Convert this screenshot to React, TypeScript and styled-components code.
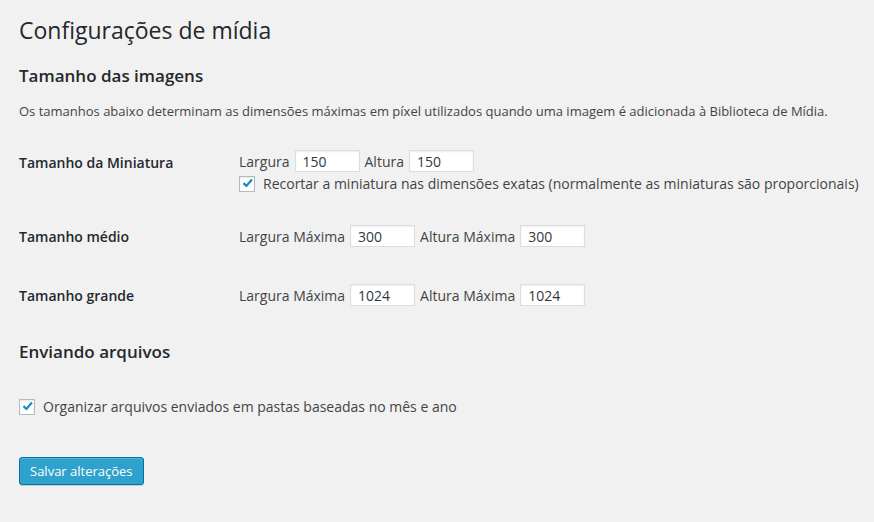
import React from "react";
import styled, { createGlobalStyle } from "styled-components";

const GlobalStyle = createGlobalStyle`
  html, body {
    margin: 0;
    padding: 0;
    background: #f1f1f1;
  }
  body {
    font-family: "Open Sans", "Noto Sans", sans-serif;
    font-size: 13px;
    color: #444;
  }
  * { box-sizing: border-box; }
`;

const Wrap = styled.div`
  padding: 7px 0 20px 19px;
`;

const Title = styled.h1`
  margin: 0;
  padding: 9px 15px 4px 0;
  font-size: 23px;
  font-weight: 400;
  line-height: 29px;
  color: #23282d;
`;

const SectionTitle = styled.h2<{ $top: number }>`
  margin: ${(p) => p.$top}px 0 0;
  font-size: 17px;
  font-weight: 600;
  line-height: 24px;
  color: #23282d;
`;

const Description = styled.p`
  margin: 13px 0 0;
  font-size: 13px;
  line-height: 20px;
  color: #444;
`;

const FormTable = styled.div`
  margin-top: 14px;
  display: flex;
  flex-direction: column;
`;

const Row = styled.div<{ $bottom: number }>`
  display: grid;
  grid-template-columns: 220px 1fr;
  padding-bottom: ${(p) => p.$bottom}px;
`;

const RowLabel = styled.div<{ $top: number }>`
  padding-top: ${(p) => p.$top}px;
  font-size: 14px;
  line-height: 19px;
  font-weight: 600;
  color: #23282d;
`;

const RowField = styled.div`
  padding-top: 15px;
  display: flex;
  flex-direction: column;
  gap: 4px;
`;

const FieldLine = styled.div`
  display: flex;
  align-items: center;
  height: 22px;
  gap: 5px;
`;

const FieldLabel = styled.label`
  font-size: 14px;
  line-height: 18px;
  padding-top: 1px;
  color: #444;
  white-space: nowrap;
`;

const NumberInput = styled.input`
  width: 65px;
  height: 22px;
  margin: 0;
  padding: 0 7px;
  border: 1px solid #ddd;
  background: #fff;
  box-shadow: inset 0 1px 2px rgba(0, 0, 0, 0.07);
  font-family: "Open Sans", "Noto Sans", sans-serif;
  font-size: 14px;
  color: #32373c;
  outline: none;
  border-radius: 0;
`;

const CheckLine = styled.label<{ $top?: number }>`
  display: flex;
  align-items: center;
  gap: 8px;
  height: 16px;
  margin-top: ${(p) => p.$top ?? 0}px;
  font-size: 14px;
  line-height: 18px;
  color: #444;
  white-space: nowrap;
`;

const CheckBox = styled.span`
  flex: none;
  width: 16px;
  height: 16px;
  border: 1px solid #b4b9be;
  background: #fff;
  box-shadow: inset 0 1px 2px rgba(0, 0, 0, 0.1);
  display: flex;
  align-items: center;
  justify-content: center;
  svg {
    display: block;
  }
`;

const PrimaryButton = styled.button`
  margin-top: 42px;
  height: 28px;
  padding: 0 10px 1px;
  border: 1px solid #0074a2;
  border-radius: 3px;
  background: #2ea2cc;
  box-shadow: inset 0 1px 0 rgba(120, 200, 230, 0.5), 0 1px 0 rgba(0, 0, 0, 0.15);
  color: #fff;
  font-family: "Open Sans", "Noto Sans", sans-serif;
  font-size: 13px;
  line-height: 26px;
  cursor: pointer;
`;

const Check = () => (
  <CheckBox role="checkbox" aria-checked="true">
    <svg width="14" height="14" viewBox="0 0 14 14">
      <path
        d="M3.4 6.2 L6.4 8.9 L11.9 2.6"
        fill="none"
        stroke="#1e8cbe"
        strokeWidth="2.3"
        strokeLinecap="butt"
        strokeLinejoin="miter"
      />
    </svg>
  </CheckBox>
);

export default function App() {
  return (
    <>
      <GlobalStyle />
      <Wrap>
        <Title>Configurações de mídia</Title>
        <SectionTitle $top={15}>Tamanho das imagens</SectionTitle>
        <Description>
          Os tamanhos abaixo determinam as dimensões máximas em píxel utilizados quando uma imagem é adicionada à Biblioteca de Mídia.
        </Description>
        <FormTable>
          <Row $bottom={18}>
            <RowLabel $top={18}>Tamanho da Miniatura</RowLabel>
            <RowField>
              <FieldLine>
                <FieldLabel>Largura</FieldLabel>
                <NumberInput defaultValue="150" />
                <FieldLabel>Altura</FieldLabel>
                <NumberInput defaultValue="150" />
              </FieldLine>
              <CheckLine>
                <Check />
                Recortar a miniatura nas dimensões exatas (normalmente as miniaturas são proporcionais)
              </CheckLine>
            </RowField>
          </Row>
          <Row $bottom={22}>
            <RowLabel $top={17}>Tamanho médio</RowLabel>
            <RowField>
              <FieldLine>
                <FieldLabel>Largura Máxima</FieldLabel>
                <NumberInput defaultValue="300" />
                <FieldLabel>Altura Máxima</FieldLabel>
                <NumberInput defaultValue="300" />
              </FieldLine>
            </RowField>
          </Row>
          <Row $bottom={22}>
            <RowLabel $top={17}>Tamanho grande</RowLabel>
            <RowField>
              <FieldLine>
                <FieldLabel>Largura Máxima</FieldLabel>
                <NumberInput defaultValue="1024" />
                <FieldLabel>Altura Máxima</FieldLabel>
                <NumberInput defaultValue="1024" />
              </FieldLine>
            </RowField>
          </Row>
        </FormTable>
        <SectionTitle $top={12}>Enviando arquivos</SectionTitle>
        <CheckLine $top={35}>
          <Check />
          Organizar arquivos enviados em pastas baseadas no mês e ano
        </CheckLine>
        <PrimaryButton type="button">Salvar alterações</PrimaryButton>
      </Wrap>
    </>
  );
}
